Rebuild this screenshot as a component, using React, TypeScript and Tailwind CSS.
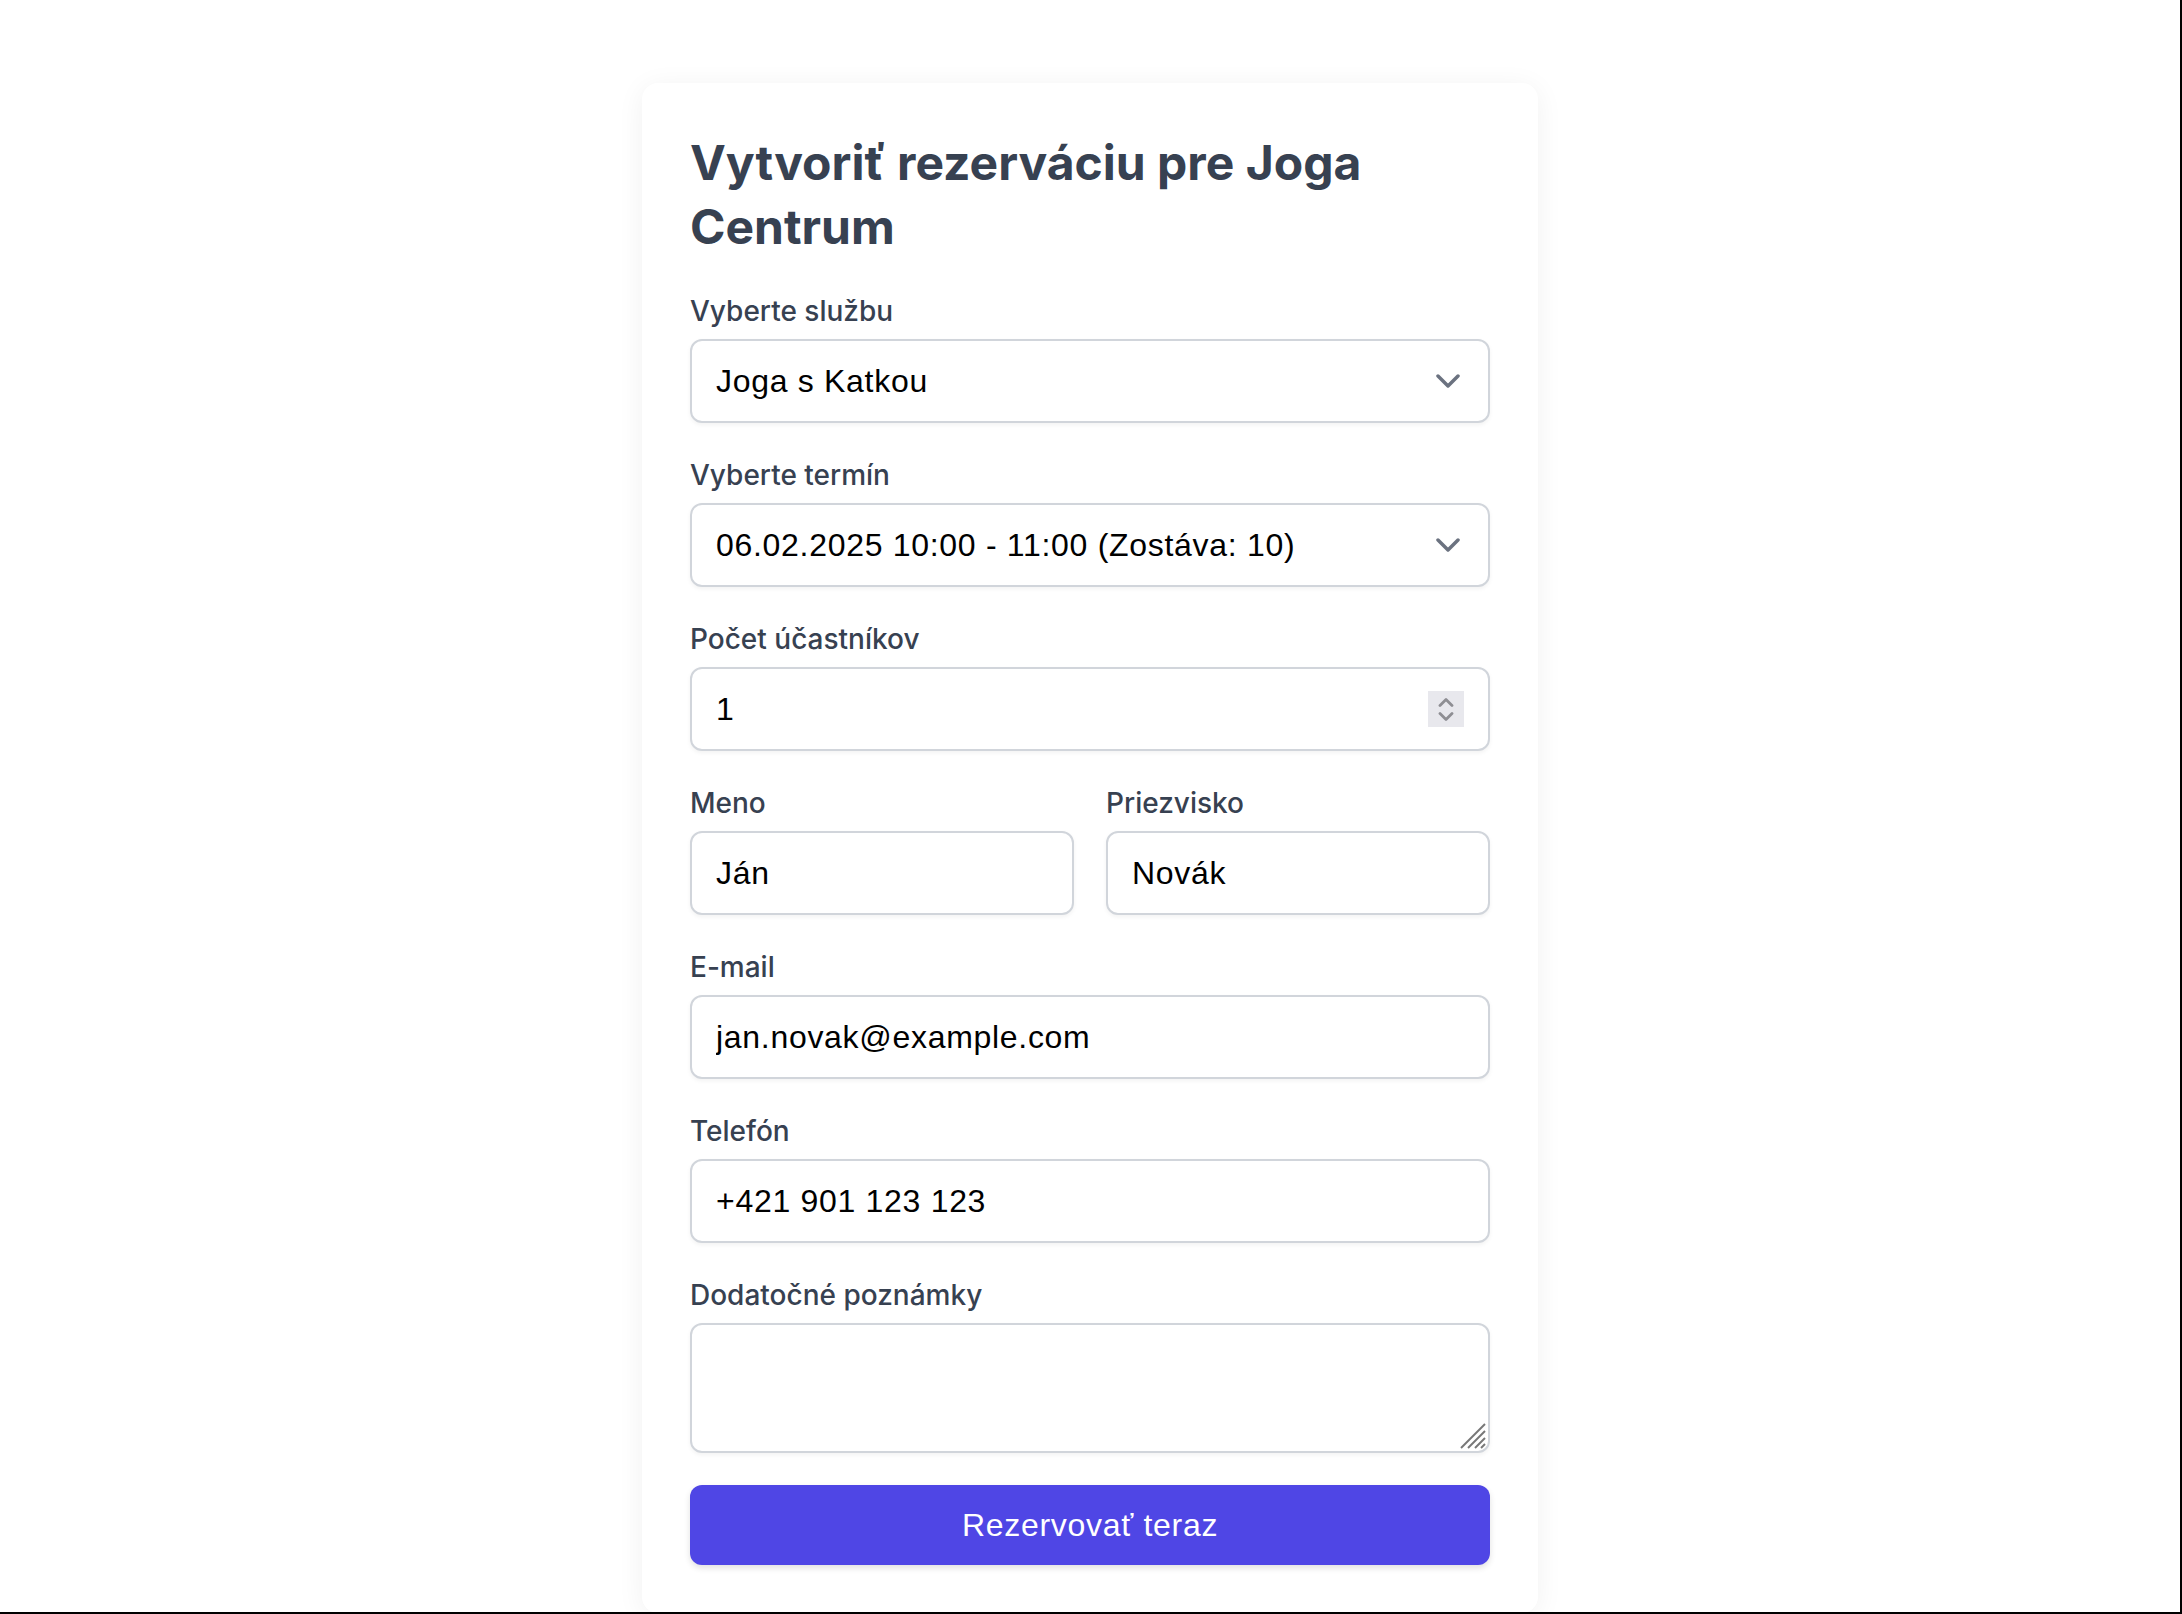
import React from 'react';

const LABEL = 'block text-[28px] leading-[40px] font-medium text-[#374151] [font-family:Inter,sans-serif]';
const FIELD =
  'flex items-center h-[84px] px-[24px] rounded-[12px] border-2 border-[#d1d5db] bg-white shadow-[0_2px_4px_rgba(0,0,0,0.05)]';
const VALUE =
  'flex-1 min-w-0 bg-transparent outline-none text-[32px] leading-[48px] text-black tracking-[0.7px] [font-family:"Liberation_Sans",Arial,sans-serif]';

function Chevron() {
  return (
    <svg width="24" height="14" viewBox="0 0 24 14" className="mr-[4px] shrink-0">
      <path d="M2 2 L12 12 L22 2" fill="none" stroke="#6b7280" strokeWidth="3.5" strokeLinecap="round" strokeLinejoin="round" />
    </svg>
  );
}

function Spinner() {
  return (
    <div className="w-[36px] h-[36px] bg-[#e8e8ed] shrink-0 flex flex-col items-center justify-center gap-[5px]">
      <svg width="16" height="9" viewBox="0 0 16 9">
        <path d="M2 7.5 L8 1.5 L14 7.5" fill="none" stroke="#8e8e93" strokeWidth="2.8" strokeLinecap="round" strokeLinejoin="round" />
      </svg>
      <svg width="16" height="9" viewBox="0 0 16 9">
        <path d="M2 1.5 L8 7.5 L14 1.5" fill="none" stroke="#8e8e93" strokeWidth="2.8" strokeLinecap="round" strokeLinejoin="round" />
      </svg>
    </div>
  );
}

function Field({ label, value, kind }: { label: string; value: string; kind?: 'select' | 'number' }) {
  return (
    <div>
      <label className={LABEL}>{label}</label>
      <div className={`${FIELD} mt-[8px]`}>
        <input readOnly value={value} className={VALUE} />
        {kind === 'select' && <Chevron />}
        {kind === 'number' && <Spinner />}
      </div>
    </div>
  );
}

export default function App() {
  return (
    <div className="h-[1614px] overflow-hidden bg-white border-r-2 border-b-2 border-black flex justify-center pt-[83px]">
      <div className="w-[896px] bg-white rounded-[16px] p-[48px] shadow-[0_4px_28px_rgba(0,0,0,0.06)] self-start">
        <h1 className="text-[48px] leading-[64px] font-bold text-[#374151] [font-family:Inter,sans-serif] mb-[32px]">
          Vytvoriť rezerváciu pre Joga Centrum
        </h1>

        <form className="flex flex-col gap-[32px]">
          <Field label="Vyberte službu" value="Joga s Katkou" kind="select" />
          <Field label="Vyberte termín" value="06.02.2025 10:00 - 11:00 (Zostáva: 10)" kind="select" />
          <Field label="Počet účastníkov" value="1" kind="number" />

          <div className="grid grid-cols-2 gap-[32px]">
            <Field label="Meno" value="Ján" />
            <Field label="Priezvisko" value="Novák" />
          </div>

          <Field label="E-mail" value="jan.novak@example.com" />
          <Field label="Telefón" value="+421 901 123 123" />

          <div>
            <label className={LABEL}>Dodatočné poznámky</label>
            <div className="relative mt-[8px] h-[130px] rounded-[12px] border-2 border-[#d1d5db] bg-white shadow-[0_2px_4px_rgba(0,0,0,0.05)]">
              <textarea className={`${VALUE} w-full h-full resize-none px-[24px] py-[16px]`} />
              <svg width="26" height="26" viewBox="0 0 26 26" className="absolute right-[2px] bottom-[2px]">
                <g stroke="#777" strokeWidth="2">
                  <line x1="1" y1="25" x2="25" y2="1" />
                  <line x1="8" y1="25" x2="25" y2="8" />
                  <line x1="15" y1="25" x2="25" y2="15" />
                  <line x1="21" y1="25" x2="25" y2="21" />
                </g>
              </svg>
            </div>
          </div>

          <button
            type="button"
            className="h-[80px] rounded-[12px] bg-[#4f46e5] text-white text-[32px] tracking-[0.7px] [font-family:'Liberation_Sans',Arial,sans-serif] shadow-[0_3px_6px_rgba(0,0,0,0.12)]"
          >
            Rezervovať teraz
          </button>
        </form>
      </div>
    </div>
  );
}
